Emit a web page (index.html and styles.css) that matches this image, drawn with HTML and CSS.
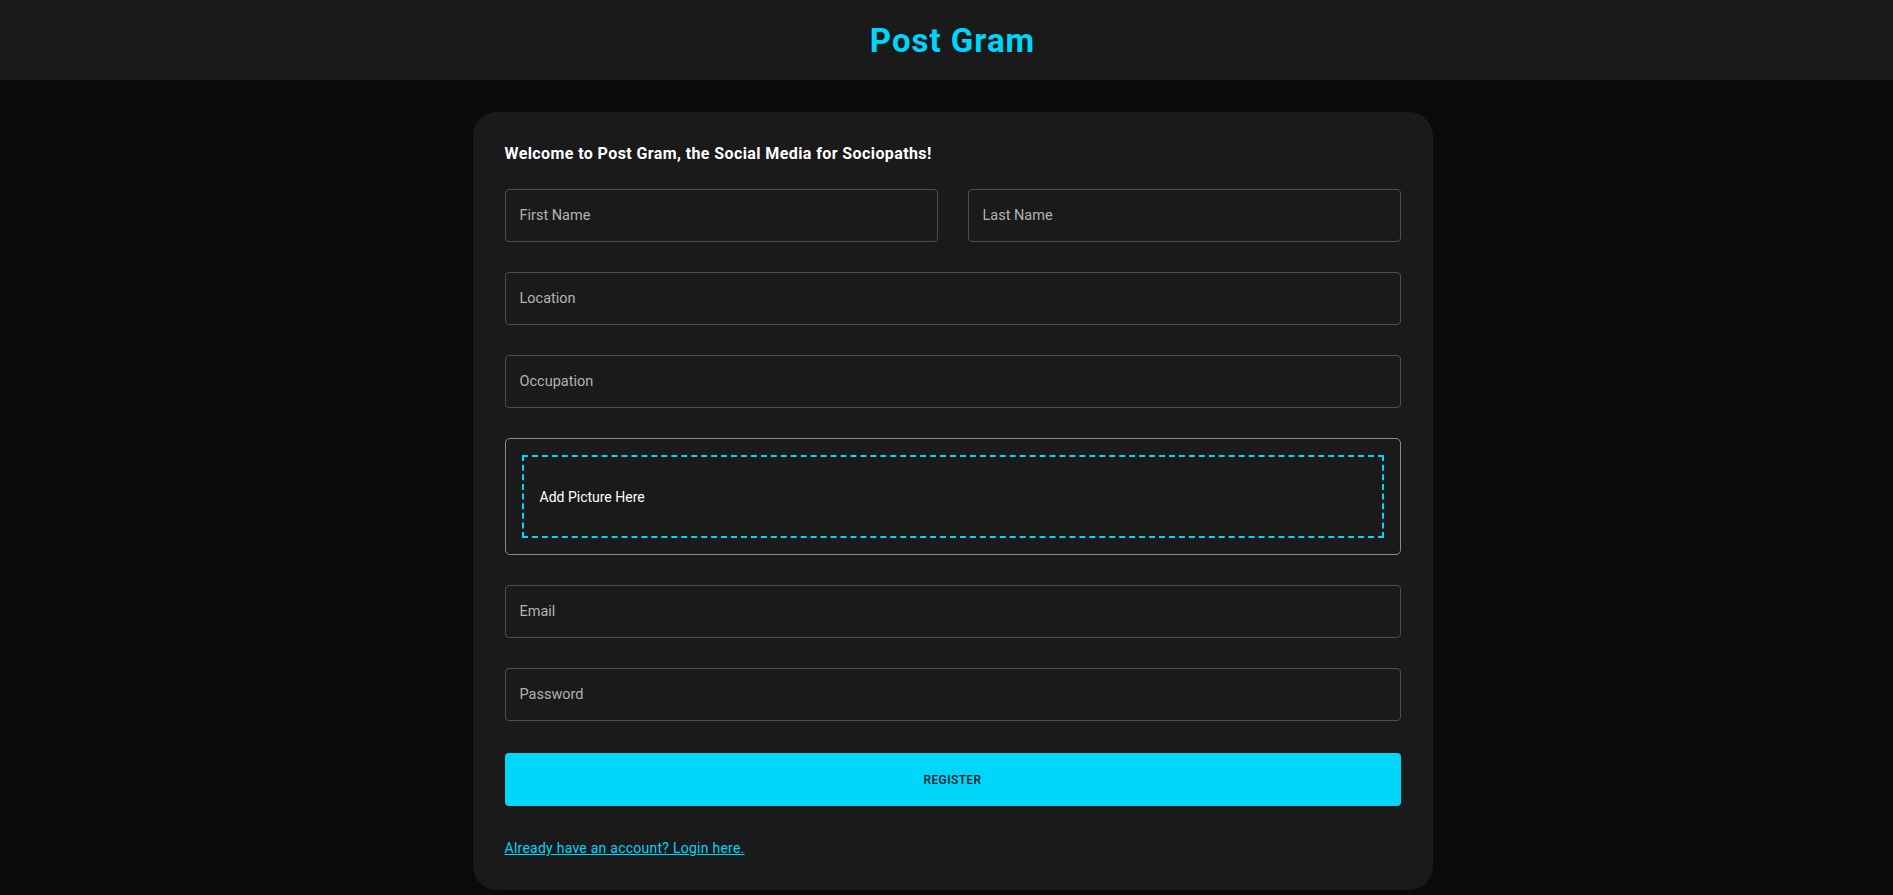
FILE: index.html
```html
<!DOCTYPE html>
<html lang="en">
<head>
<meta charset="utf-8">
<title>Post Gram</title>
<link rel="stylesheet" href="styles.css">
</head>
<body>
<header class="topbar">
  <h1 class="brand">Post Gram</h1>
</header>
<main class="page">
  <section class="card">
    <h2 class="welcome">Welcome to Post Gram, the Social Media for Sociopaths!</h2>
    <form class="form">
      <div class="field half"><span class="label">First Name</span></div>
      <div class="field half"><span class="label">Last Name</span></div>
      <div class="field full"><span class="label">Location</span></div>
      <div class="field full"><span class="label">Occupation</span></div>
      <div class="picture full">
        <div class="dropzone"><span>Add Picture Here</span></div>
      </div>
      <div class="field full"><span class="label">Email</span></div>
      <div class="field full"><span class="label">Password</span></div>
      <button type="button" class="register full">REGISTER</button>
      <a class="login full" href="#">Already have an account? Login here.</a>
    </form>
  </section>
</main>
</body>
</html>
```

FILE: styles.css
```css
* { box-sizing: border-box; }

html, body {
  margin: 0;
  padding: 0;
  background: #0a0a0a;
  font-family: "Roboto", "Liberation Sans", sans-serif;
  color: #ffffff;
}

.topbar {
  height: 80px;
  background: #1a1a1a;
  display: flex;
  align-items: center;
  justify-content: center;
  padding-left: 12px;
}

.brand {
  margin: 0;
  font-size: 33px;
  font-weight: 700;
  color: #00d5fa;
  letter-spacing: 1px;
}

.page {
  padding: 32px 0 0 12px;
  display: flex;
  justify-content: center;
}

.card {
  width: 960px;
  background: #1a1a1a;
  border-radius: 24px;
  padding: 31px 32px 32px;
}

.welcome {
  margin: 0 0 24px;
  font-size: 16px;
  font-weight: 700;
  line-height: 22px;
  letter-spacing: 0.4px;
  color: #ffffff;
}

.form {
  display: grid;
  grid-template-columns: 1fr 1fr;
  column-gap: 30px;
  row-gap: 30px;
}

.full { grid-column: 1 / -1; }

.field {
  height: 53px;
  border: 1px solid #4f4f4f;
  border-radius: 4px;
  display: flex;
  align-items: center;
  padding: 0 14px;
}

.label {
  font-size: 14.5px;
  color: #b3b3b3;
}

.picture {
  height: 117px;
  border: 1px solid #8a8a8a;
  border-radius: 5px;
  padding: 16px;
}

.dropzone {
  height: 100%;
  border: 2px dashed #00d5fa;
  display: flex;
  align-items: center;
  padding: 0 16px;
  font-size: 14px;
  color: #ffffff;
}

.register {
  height: 53px;
  margin-top: 2px;
  border: none;
  border-radius: 4px;
  background: #00d5fa;
  color: #1a1a1a;
  font-family: inherit;
  font-size: 12px;
  font-weight: 500;
  letter-spacing: 0.4px;
}

.login {
  margin-top: 2px;
  justify-self: start;
  font-size: 14px;
  line-height: 20px;
  letter-spacing: 0.25px;
  color: #00d5fa;
  text-decoration: underline;
}
```
